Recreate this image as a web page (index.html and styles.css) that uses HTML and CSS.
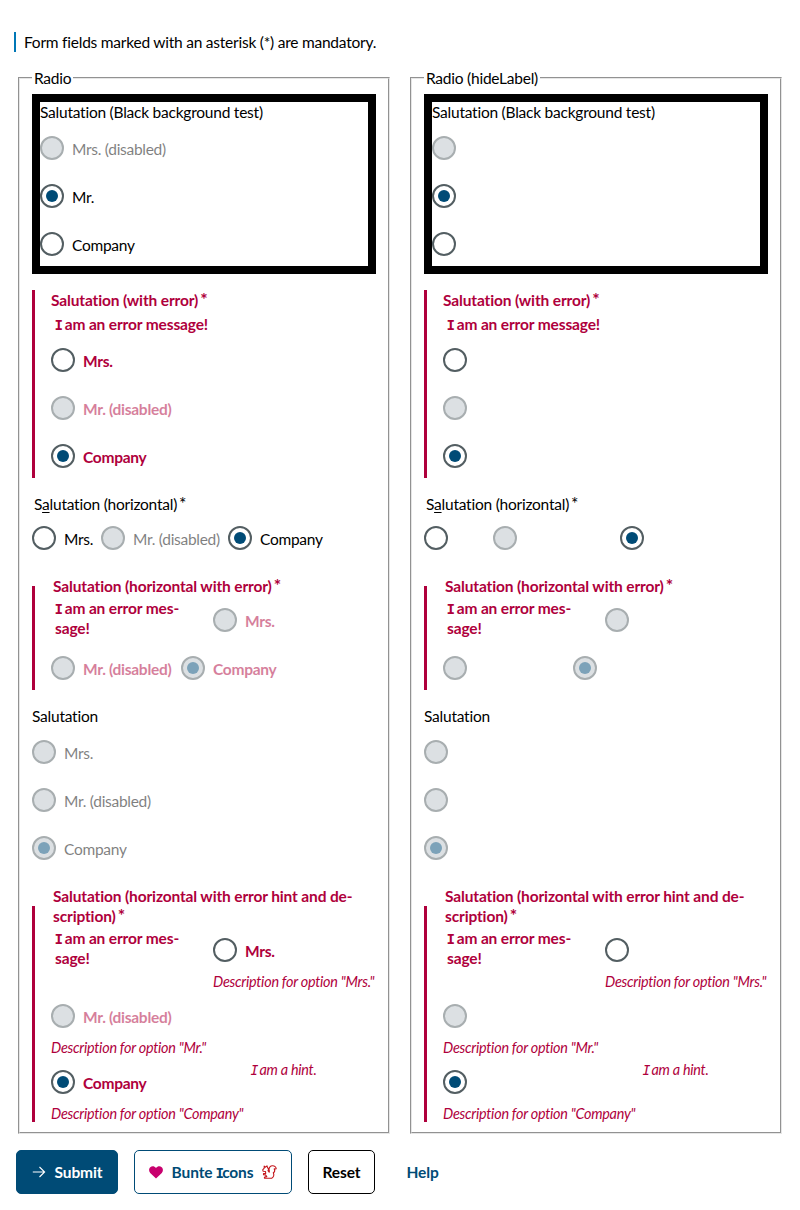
FILE: index.html
```html
<!DOCTYPE html>
<html lang="en">
<head>
<meta charset="utf-8">
<title>Radio</title>
<link rel="stylesheet" href="styles.css">
</head>
<body>
<p class="notice">Form fields marked with an asterisk (*) are mandatory.</p>
<main class="columns">
  <fieldset class="panel">
    <legend>Radio</legend>
    <section class="group boxed">
      <div class="title">Salutation (Black background test)</div>
      <div class="stack">
        <label class="radio off"><i class="dot"></i><span>Mrs. (disabled)</span></label>
        <label class="radio"><i class="dot on"></i><span>Mr.</span></label>
        <label class="radio"><i class="dot"></i><span>Company</span></label>
      </div>
    </section>
    <section class="group error">
      <div class="title">Salutation (with error)<span class="star">*</span></div>
      <div class="message"><span class="cap">I</span> am an error message!</div>
      <div class="stack">
        <label class="radio"><i class="dot"></i><span>Mrs.</span></label>
        <label class="radio off"><i class="dot"></i><span>Mr. (disabled)</span></label>
        <label class="radio"><i class="dot on"></i><span>Company</span></label>
      </div>
    </section>
    <section class="group">
      <div class="title tight">S<u>a</u>lutation (horizontal)<span class="star">*</span></div>
      <div class="row">
        <label class="radio w-mrs"><i class="dot"></i><span>Mrs.</span></label>
        <label class="radio off w-mr"><i class="dot"></i><span>Mr. (disabled)</span></label>
        <label class="radio"><i class="dot on"></i><span>Company</span></label>
      </div>
    </section>
    <fieldset class="group error native">
      <legend>Salutation (horizontal with error)<span class="star">*</span></legend>
      <div class="stack">
        <div class="row">
          <div class="message side"><span class="cap">I</span> am an error mes-<br>sage!</div>
          <label class="radio off"><i class="dot"></i><span>Mrs.</span></label>
        </div>
        <div class="row">
          <label class="radio off w-bold"><i class="dot"></i><span>Mr. (disabled)</span></label>
          <label class="radio off"><i class="dot on"></i><span>Company</span></label>
        </div>
      </div>
    </fieldset>
    <section class="group">
      <div class="title">Salutation</div>
      <div class="stack">
        <label class="radio off"><i class="dot"></i><span>Mrs.</span></label>
        <label class="radio off"><i class="dot"></i><span>Mr. (disabled)</span></label>
        <label class="radio off"><i class="dot on"></i><span>Company</span></label>
      </div>
    </section>
    <fieldset class="group error native">
      <legend>Salutation (horizontal with error hint and de-<br>scription)<span class="star">*</span></legend>
      <div class="stack">
        <div class="row">
          <div class="message side"><span class="cap">I</span> am an error mes-<br>sage!</div>
          <div><label class="radio"><i class="dot"></i><span>Mrs.</span></label><div class="desc">Description for option "Mrs."</div></div>
        </div>
        <div><label class="radio off"><i class="dot"></i><span>Mr. (disabled)</span></label><div class="desc">Description for option "Mr."</div></div>
        <div class="row">
          <div class="w-option"><label class="radio"><i class="dot on"></i><span>Company</span></label><div class="desc">Description for option "Company"</div></div>
          <div class="desc"><span class="cap">I</span> am a hint.</div>
        </div>
      </div>
    </fieldset>
  </fieldset>

  <fieldset class="panel">
    <legend>Radio (hideLabel)</legend>
    <section class="group boxed">
      <div class="title">Salutation (Black background test)</div>
      <div class="stack">
        <label class="radio off"><i class="dot"></i></label>
        <label class="radio"><i class="dot on"></i></label>
        <label class="radio"><i class="dot"></i></label>
      </div>
    </section>
    <section class="group error">
      <div class="title">Salutation (with error)<span class="star">*</span></div>
      <div class="message"><span class="cap">I</span> am an error message!</div>
      <div class="stack">
        <label class="radio"><i class="dot"></i></label>
        <label class="radio off"><i class="dot"></i></label>
        <label class="radio"><i class="dot on"></i></label>
      </div>
    </section>
    <section class="group">
      <div class="title tight">S<u>a</u>lutation (horizontal)<span class="star">*</span></div>
      <div class="row">
        <label class="radio w-mrs"><i class="dot"></i></label>
        <label class="radio off w-mr"><i class="dot"></i></label>
        <label class="radio"><i class="dot on"></i></label>
      </div>
    </section>
    <fieldset class="group error native">
      <legend>Salutation (horizontal with error)<span class="star">*</span></legend>
      <div class="stack">
        <div class="row">
          <div class="message side"><span class="cap">I</span> am an error mes-<br>sage!</div>
          <label class="radio off"><i class="dot"></i></label>
        </div>
        <div class="row">
          <label class="radio off w-bold"><i class="dot"></i></label>
          <label class="radio off"><i class="dot on"></i></label>
        </div>
      </div>
    </fieldset>
    <section class="group">
      <div class="title">Salutation</div>
      <div class="stack">
        <label class="radio off"><i class="dot"></i></label>
        <label class="radio off"><i class="dot"></i></label>
        <label class="radio off"><i class="dot on"></i></label>
      </div>
    </section>
    <fieldset class="group error native">
      <legend>Salutation (horizontal with error hint and de-<br>scription)<span class="star">*</span></legend>
      <div class="stack">
        <div class="row">
          <div class="message side"><span class="cap">I</span> am an error mes-<br>sage!</div>
          <div><label class="radio"><i class="dot"></i></label><div class="desc">Description for option "Mrs."</div></div>
        </div>
        <div><label class="radio off"><i class="dot"></i></label><div class="desc">Description for option "Mr."</div></div>
        <div class="row">
          <div class="w-option"><label class="radio"><i class="dot on"></i></label><div class="desc">Description for option "Company"</div></div>
          <div class="desc"><span class="cap">I</span> am a hint.</div>
        </div>
      </div>
    </fieldset>
  </fieldset>
</main>
<footer class="actions">
  <button class="btn primary">
    <svg width="14" height="12" viewBox="0 0 14 12" fill="none" stroke="currentColor" stroke-width="1.1"><path d="M.8 6H12.600M7.500 1 12.600 6 7.500 11"/></svg>
    <span>Submit</span>
  </button>
  <button class="btn secondary">
    <svg width="14" height="13" viewBox="0 0 14 13" fill="#c8006e"><path d="M7 12.600 1.200 7C-.4 5.300-.2 2.500 1.300 1.200 3-.3 5.500.1 7 2 8.500.1 11-.3 12.700 1.200 14.200 2.500 14.400 5.300 12.800 7Z"/></svg>
    <span>Bunte <span class="cap">I</span>cons</span>
    <svg width="15" height="14" viewBox="0 0 15 14" fill="none" stroke="#c4161c" stroke-width="1.1" stroke-linejoin="round"><path d="M2.200 1 3.200 2.200 5 .9 5.600 2.800C6.600 3.400 6.800 4.600 6 5.600L7.200 7.200C7.600 6.400 7.200 5.400 7.100 4.400 7 2.400 8.400.9 10.400.8 12.600.7 14.200 2 14.200 3.700 13.700 4.300 12.900 4.100 12.200 3.900 13 5.300 12.700 6.900 11.300 7.700 12.400 9.800 11.700 12.200 9.700 13.200H2.400C2.200 12.200 3 11.600 4.800 11.600L3.500 9.900 1.500 9.700 1.500 8.500H3.700L3.500 6.500 1.200 6.300.7 4.800 2.200 3.200Z"/></svg>
  </button>
  <button class="btn plain">Reset</button>
  <button class="btn link">Help</button>
</footer>
</body>
</html>
```
FILE: styles.css
```css
* { box-sizing: border-box; }
body {
  margin: 0;
  padding: 32px 18px 0;
  background: #fff;
  color: #000;
  font-family: Lato, "Liberation Sans", sans-serif;
  font-size: 15.5px;
  line-height: 20px;
  letter-spacing: -0.23px;
  white-space: nowrap;
}
.notice {
  margin: 0 0 16px -4px;
  padding: 0 0 0 8px;
  height: 20px;
  border-left: 2px solid #0077b6;
}
.columns { display: grid; grid-template-columns: 372px 372px; gap: 20px; }
.panel {
  margin: 0;
  min-width: 0;
  padding: 6px 12px 10px;
  border: 2px solid;
  border-color: #9a9a9a #e2e2e2 #e2e2e2 #9a9a9a;
  border: 2px groove #e6e6e6;
}
.panel > legend { height: 20px; padding: 0 2px; }
.group { display: block; margin: 0 0 16px; padding: 0; border: 0; min-width: 0; }
.group:last-child { margin-bottom: 0; }
.boxed { border: 8px solid #000; }
.title { height: 24px; }
.title.tight { height: 22px; padding-left: 2px; }
.title u { text-underline-offset: 2px; }
.star { margin-left: 2px; font-size: 17.5px; line-height: 1; }
.error {
  padding-left: 16px;
  border-left: 3px solid #af003c;
  color: #af003c;
  font-weight: 700;
  letter-spacing: -0.14px;
}
.native > legend { height: auto; padding: 0 2px; margin-bottom: 2px; }
.message { height: 24px; padding-left: 4px; }
.message.side { width: 162px; height: 44px; }
.stack { display: flex; flex-direction: column; gap: 4px; }
.row { display: flex; }
.radio { display: flex; align-items: center; height: 44px; gap: 8px; }
.radio span { padding-top: 1px; }
.radio span { letter-spacing: -0.28px; }
.off span { opacity: .5; }
.dot {
  display: grid;
  place-items: center;
  width: 24px;
  height: 24px;
  flex: none;
  border: 2px solid #535e62;
  border-radius: 50%;
  background: #fff;
}
.dot.on::before { content: ""; width: 12px; height: 12px; border-radius: 50%; background: #004b76; }
.off .dot { border-color: #a8aeb0; background: #dce0e3; }
.off .dot.on::before { background: #7ca2b9; }
.w-mrs { width: 69px; }
.w-mr { width: 127px; }
.w-bold { width: 130px; }
.w-option { width: 200px; }
.desc {
  height: 18px;
  line-height: 19px;
  font-size: 14.4px;
  font-weight: 400;
  font-style: italic;
  letter-spacing: -0.26px;
}
.cap { font-family: "DejaVu Sans Mono", monospace; font-size: 0.92em; line-height: 1; margin: 0 -1.8px 0 -0.6px; }
.actions { display: flex; gap: 16px; margin: 16px 0 0 -2px; }
.btn {
  display: flex;
  align-items: center;
  justify-content: center;
  height: 44px;
  gap: 9px;
  padding: 0;
  border: 1px solid currentColor;
  border-radius: 5px;
  background: #fff;
  color: #004b76;
  font: inherit;
  font-weight: 700;
  letter-spacing: -0.12px;
}
.primary { width: 102px; background: #004b76; border-color: #004b76; color: #fff; }
.secondary { width: 158px; }
.plain { width: 67px; color: #000; }
.link { width: 63px; border-color: transparent; }
```
